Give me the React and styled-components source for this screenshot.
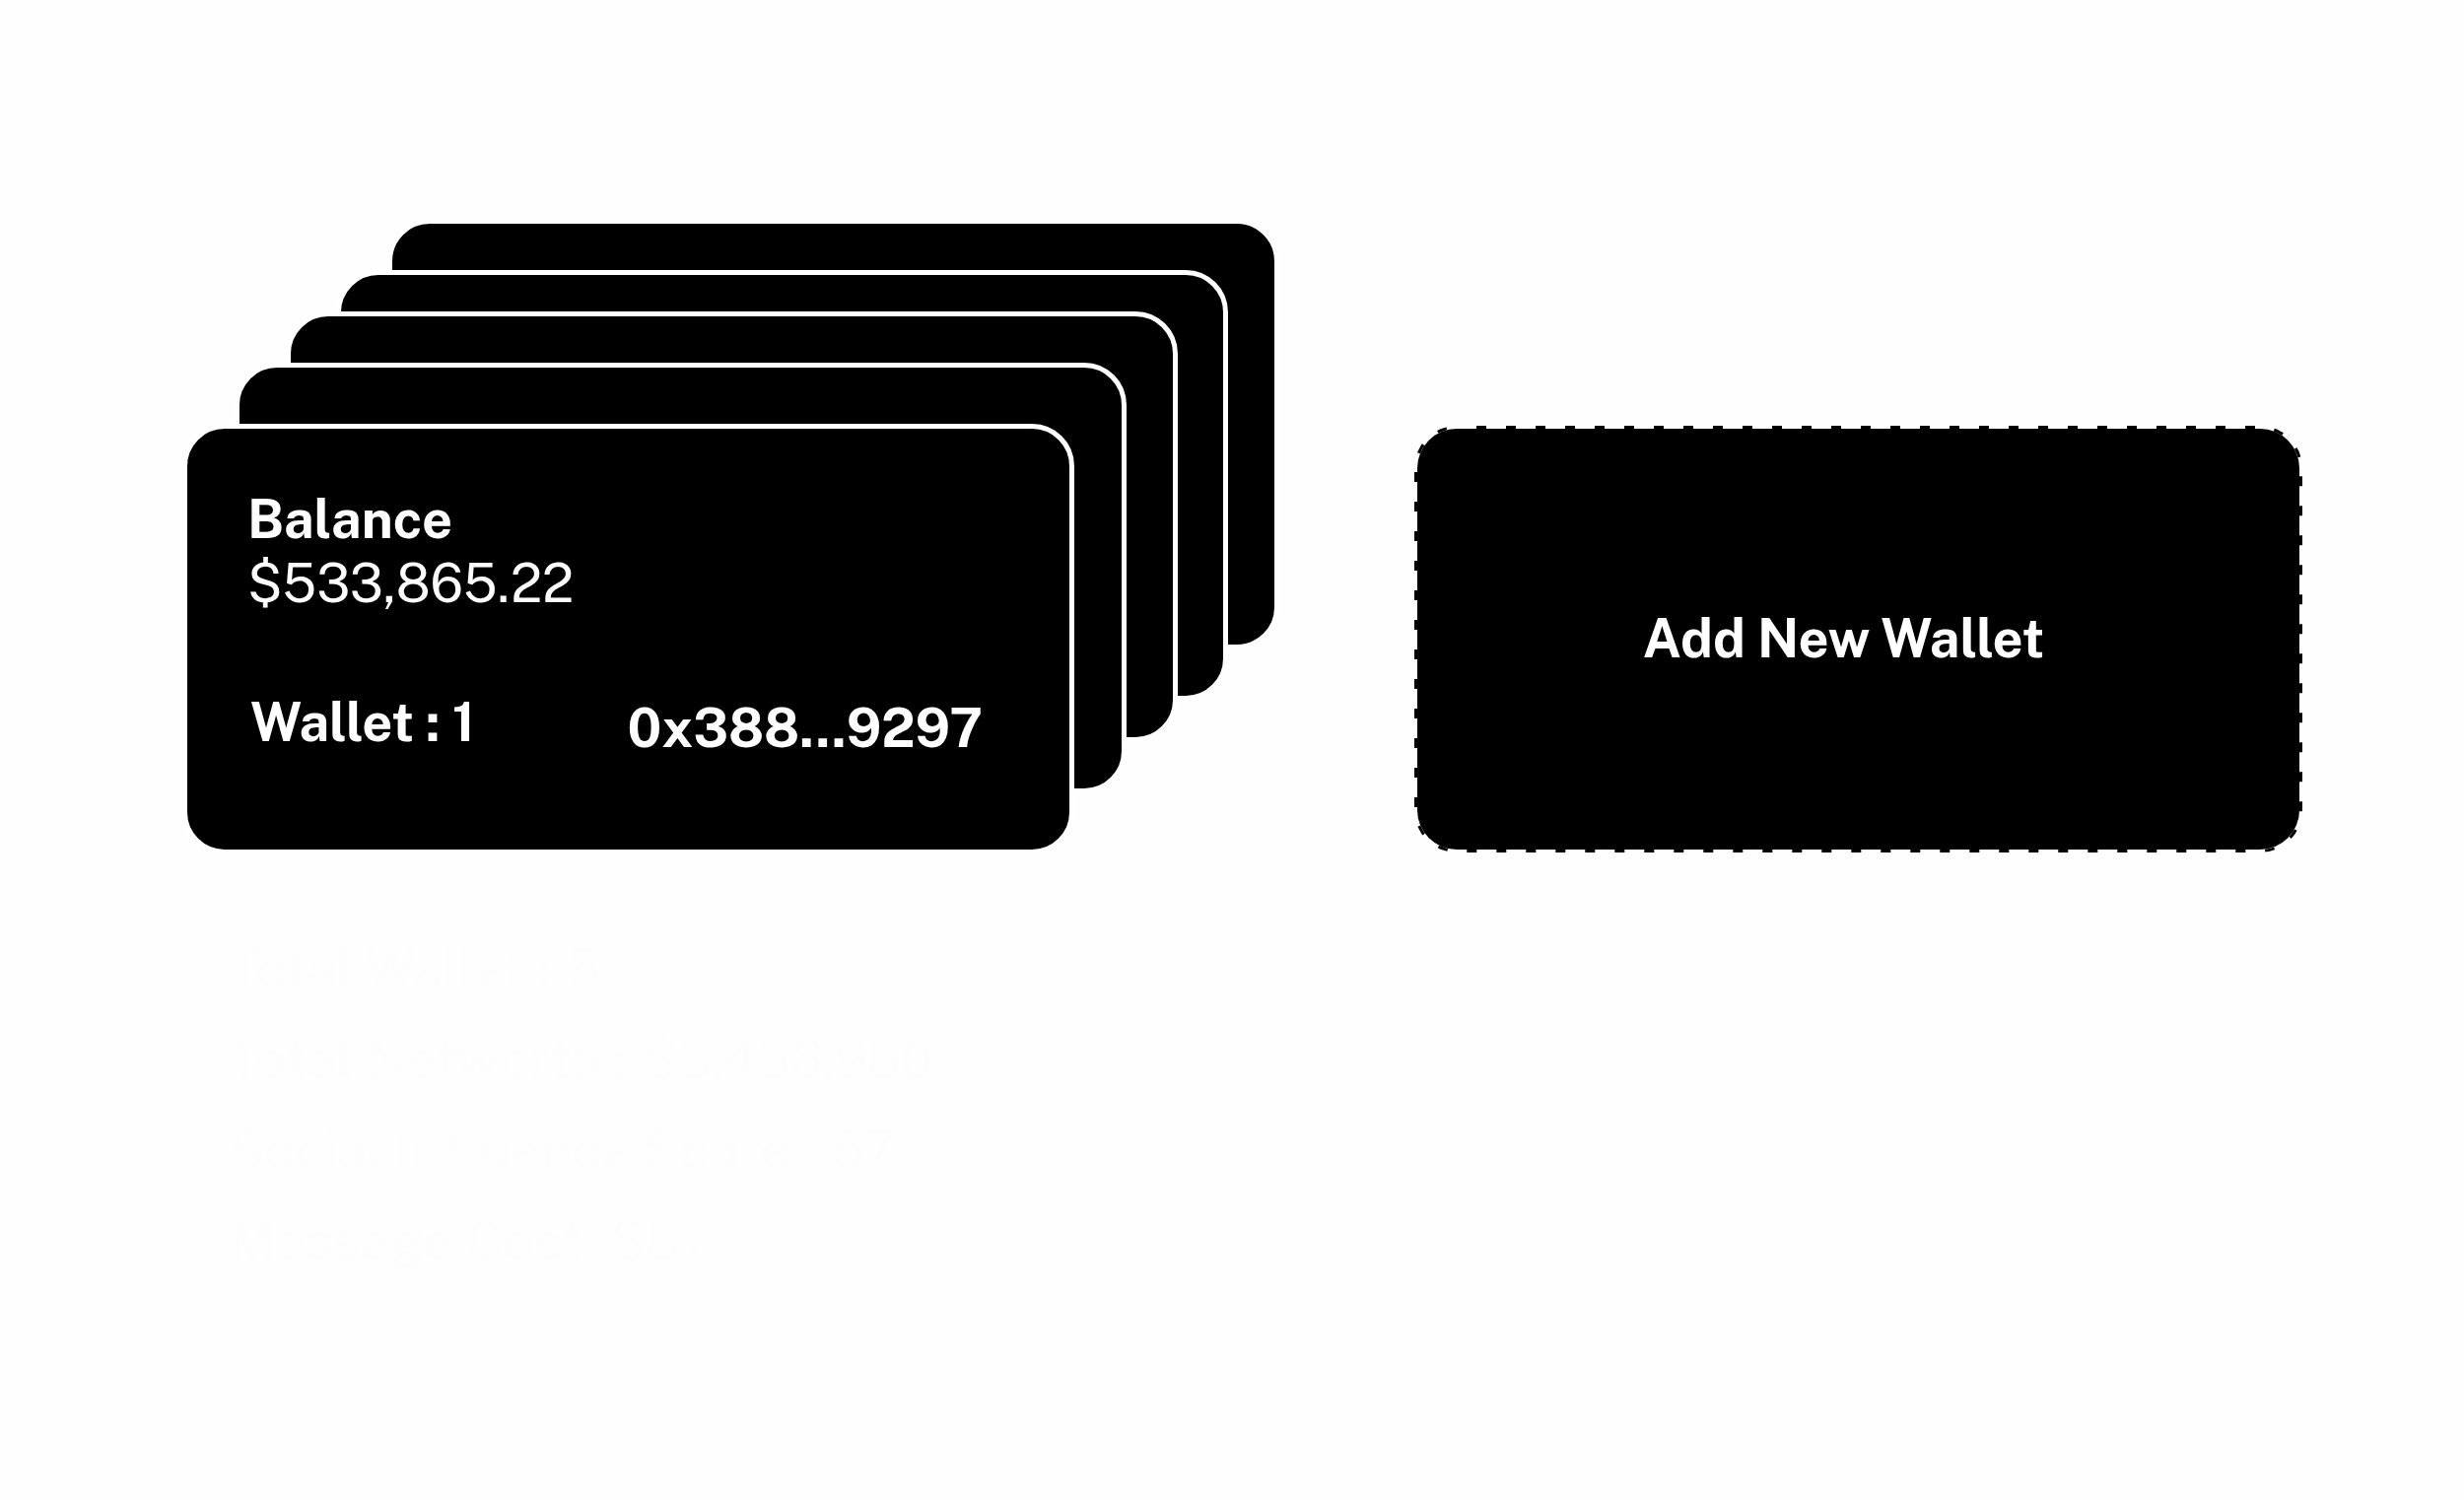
import React from "react";
import styled, { createGlobalStyle } from "styled-components";

const GlobalStyle = createGlobalStyle`
  * { box-sizing: border-box; }
  body {
    margin: 0;
    background: #fefefe;
    color: #fdfdfd;
    font-family: "Public Sans", "Inter", "Liberation Sans", sans-serif;
    font-size: 54px;
    line-height: 64px;
  }
`;

const Page = styled.main`
  display: flex;
  justify-content: space-between;
  align-items: flex-start;
  gap: 40px;
  padding: 222px 167px 180px 185px;
`;

const Column = styled.section`
  display: flex;
  flex-direction: column;
  gap: 84px;
`;

const Stack = styled.div`
  position: relative;
  width: 1113px;
  padding-top: 208px;
`;

const cardBox = `
  width: 905px;
  height: 437px;
  border: 5px solid #fff;
  border-radius: 43px;
  background: #000;
`;

const BackCard = styled.div`
  ${cardBox}
  position: absolute;
  left: ${(p) => p.$x}px;
  top: ${(p) => p.$y}px;
`;

const FrontCard = styled.article`
  ${cardBox}
  position: relative;
  display: flex;
  flex-direction: column;
  justify-content: space-between;
  padding: 60px 88px 91px 61px;
  color: #fff;
`;

const Summary = styled.div`
  display: grid;
  gap: 1px;
`;

const Label = styled.div`
  font-weight: 700;
`;

const Amount = styled.div`
  font-weight: 400;
`;

const CardFooter = styled.div`
  display: flex;
  justify-content: space-between;
  padding-left: 3px;

  ${Label}:first-child { padding-bottom: 6px; }
  ${Label}:last-child { align-self: flex-end; }
`;

const AddButton = styled.button`
  position: relative;
  width: 895px;
  height: 427px;
  margin: 213px 0 0;
  padding: 0 30px 2px 0;
  border: 0;
  border-radius: 40px;
  background: #000;
  color: #fff;
  font: inherit;
  font-weight: 700;
  cursor: pointer;
`;

const DashedOutline = styled.svg`
  position: absolute;
  left: -3px;
  top: -3px;
  width: calc(100% + 6px);
  height: calc(100% + 6px);
  clip-path: inset(0 round 43px);
`;

const Stats = styled.dl`
  display: grid;
  gap: 28px;
  margin: 0;
  padding-left: 46px;
`;

const Stat = styled.div`
  display: flex;
  gap: 16px;
  white-space: pre;

  dt { font-weight: 600; }
  dd { margin: 0; font-weight: 300; }
`;

const backCards = [
  { x: 208, y: 0 },
  { x: 156, y: 52 },
  { x: 105, y: 94 },
  { x: 53, y: 146 },
];

const stats = [
  ["Total Wallet :", "5"],
  ["Total Networth :", "$3,456,980"],
  ["Social Influence Score :", "67"],
  ["Message Cost:", "$87"],
];

export default function App() {
  return (
    <>
      <GlobalStyle />
      <Page>
        <Column>
          <Stack>
            {backCards.map((c) => (
              <BackCard key={c.x} $x={c.x} $y={c.y} />
            ))}
            <FrontCard>
              <Summary>
                <Label>Balance</Label>
                <Amount>$533,865.22</Amount>
              </Summary>
              <CardFooter>
                <Label>Wallet : 1</Label>
                <Label>0x388...9297</Label>
              </CardFooter>
            </FrontCard>
          </Stack>
          <Stats>
            {stats.map(([name, value]) => (
              <Stat key={name}>
                <dt>{name}</dt>
                <dd>{value}</dd>
              </Stat>
            ))}
          </Stats>
        </Column>
        <AddButton type="button">
          <DashedOutline viewBox="0 0 901 433" aria-hidden="true">
            <rect x="0.5" y="0.5" width="900" height="432" rx="42.5" fill="none" stroke="#000" strokeWidth="5" strokeDasharray="10 20" strokeDashoffset="10" />
          </DashedOutline>
          Add New Wallet
        </AddButton>
      </Page>
    </>
  );
}
